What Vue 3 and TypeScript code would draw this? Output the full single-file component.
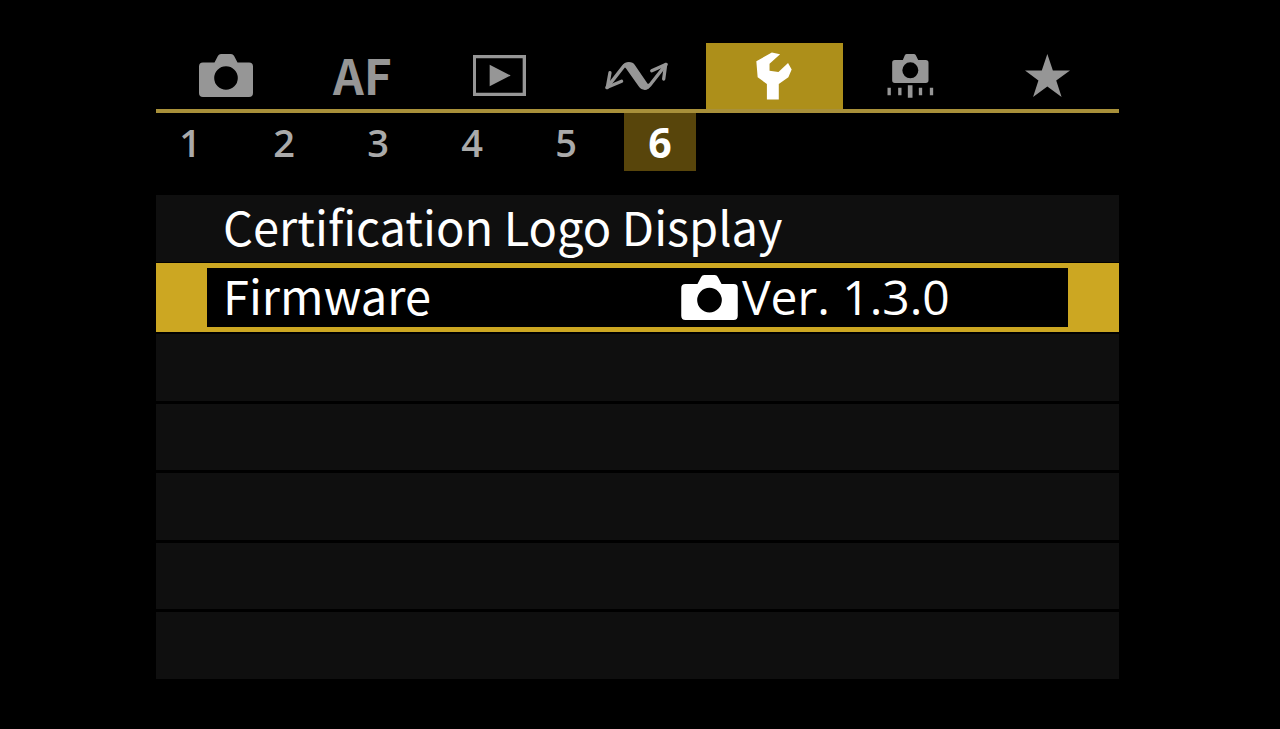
<script setup lang="ts">
import { ref } from 'vue'

interface Tab {
  id: string
  label: string
}

const tabs: Tab[] = [
  { id: 'shooting', label: 'Shooting' },
  { id: 'af', label: 'Autofocus' },
  { id: 'playback', label: 'Playback' },
  { id: 'network', label: 'Network' },
  { id: 'setup', label: 'Set-up' },
  { id: 'custom', label: 'Custom functions' },
  { id: 'mymenu', label: 'My menu' },
]
const pages: number[] = [1, 2, 3, 4, 5, 6]

const activeTab = ref('setup')
const activePage = ref(6)
</script>

<template>
  <main class="screen">
    <nav class="tabs" aria-label="Menus">
      <button
        v-for="tab in tabs"
        :key="tab.id"
        type="button"
        class="tab"
        :class="{ active: tab.id === activeTab }"
        :aria-label="tab.label"
        @click="activeTab = tab.id"
      >
        <svg v-if="tab.id === 'shooting'" class="icon-camera" viewBox="0 0 54 43">
          <path fill-rule="evenodd" d="M4 8.500H15.500L19 1.800Q20 0 22 0H32Q34 0 35 1.800L38.500 8.500H50Q54 8.500 54 12.500V39Q54 43 50 43H4Q0 43 0 39V12.500Q0 8.500 4 8.500ZM27 12.200A11.800 11.800 0 1 0 27 35.800A11.800 11.800 0 1 0 27 12.200Z" />
        </svg>
        <span v-else-if="tab.id === 'af'" class="af">AF</span>
        <svg v-else-if="tab.id === 'playback'" class="icon-play" viewBox="132 57 159 123">
          <path fill-rule="evenodd" d="M132 57H291V180H132ZM141 67V170H281V67ZM182 86L245 118.500L182 151Z" />
        </svg>
        <svg v-else-if="tab.id === 'network'" class="icon-network" viewBox="47 44 190 90">
          <g fill="none" stroke="currentColor" stroke-width="10" stroke-linecap="round" stroke-linejoin="round">
            <path d="M53 124L103 60Q109 53 118 54" />
            <path d="M62 79L54 123L97 105" />
            <path d="M168 124Q176 125 182 117L231 54" />
            <path d="M188 73L230 54L224 98" />
          </g>
          <path d="M100 56Q107 47 119 47Q131 47 138 57L174 110Q176 114 181 112L184 119Q177 131 167 131Q156 131 149 121L110 66Q107 62 102 62Z" />
        </svg>
        <svg v-else-if="tab.id === 'setup'" class="icon-wrench" viewBox="167 48 109 144">
          <path d="M215 49L240 54L208 83V104L235 108L264 81L275 100L265 124L236 144V191H200V144L172 124L168 75Z" />
        </svg>
        <svg v-else-if="tab.id === 'custom'" class="icon-custom" viewBox="560 53 140 132">
          <path fill-rule="evenodd" d="M583 71H607L613 57Q615 53 619 53H640Q644 53 646 57L653 71H676Q684 71 684 79V132Q684 140 676 140H583Q575 140 575 132V79Q575 71 583 71ZM629.500 78A24 24 0 1 0 629.500 126A24 24 0 1 0 629.500 78Z" />
          <path d="M561 154H571V177H561ZM593 154H603V177H593ZM622 147H636V184H622ZM655 154H665V177H655ZM688 154H698V177H688Z" />
        </svg>
        <svg v-else class="icon-star" viewBox="260 55 134 128">
          <path d="M326.500 55L343 104H394L353 134L369 183L326.500 152L284 183L300 134L260 104H310Z" />
        </svg>
      </button>
    </nav>

    <nav class="pages" aria-label="Pages">
      <button
        v-for="page in pages"
        :key="page"
        type="button"
        class="page"
        :class="{ active: page === activePage }"
        @click="activePage = page"
      >{{ page }}</button>
    </nav>

    <ul class="menu">
      <li><button type="button" class="row"><span class="name">Certification Logo Display</span></button></li>
      <li>
        <button type="button" class="row selected">
          <span class="name">Firmware</span>
          <span class="value">
            <svg class="icon-body" viewBox="0 0 54 43">
              <path fill-rule="evenodd" d="M4 8.500H15.500L19 1.800Q20 0 22 0H32Q34 0 35 1.800L38.500 8.500H50Q54 8.500 54 12.500V39Q54 43 50 43H4Q0 43 0 39V12.500Q0 8.500 4 8.500ZM27 12.200A11.800 11.800 0 1 0 27 35.800A11.800 11.800 0 1 0 27 12.200Z" />
            </svg>
            <span class="version">Ver. 1.3.0</span>
          </span>
        </button>
      </li>
      <li v-for="n in 5" :key="n"></li>
    </ul>
  </main>
</template>

<style>
body {
  margin: 0;
  background: #000;
}
</style>

<style scoped>
.screen {
  box-sizing: border-box;
  min-height: 100vh;
  padding: 43px 161px 50px 156px;
  background: #000;
  color: #fff;
  font-family: "Noto Sans CJK JP", "Noto Sans", sans-serif;
}
button {
  margin: 0;
  padding: 0;
  border: 0;
  background: none;
  color: inherit;
  font: inherit;
  cursor: pointer;
}
svg {
  display: block;
  fill: currentColor;
}
.tabs {
  display: grid;
  grid-template-columns: repeat(7, 1fr);
  height: 66px;
  padding: 0 2px;
  border-bottom: 4px solid #a8903a;
}
.tab {
  display: flex;
  align-items: center;
  justify-content: center;
  padding: 0 2px 1px 0;
  color: #969696;
}
.tab.active {
  background: #ad8f1a;
  color: #fff;
}
.af {
  padding-bottom: 4px;
  font-size: 48px;
  line-height: 60px;
  font-weight: 700;
}
.icon-camera { width: 54px; height: 43px; }
.icon-play { width: 53px; height: 41px; }
.icon-network { width: 63px; height: 30px; }
.icon-wrench { width: 36px; height: 48px; }
.icon-custom { width: 47px; height: 44px; }
.icon-star { width: 45px; height: 43px; }
.pages {
  display: flex;
  gap: 22px;
  height: 58px;
  margin: 0 -2px;
}
.page {
  width: 72px;
  color: #aaa;
  font-family: "Open Sans", "Noto Sans", sans-serif;
  font-size: 38px;
  line-height: 58px;
  font-weight: 600;
}
.page.active {
  background: #58450b;
  color: #fff;
  font-size: 41px;
  font-weight: 700;
}
.menu {
  display: grid;
  grid-template-rows: repeat(7, 1fr);
  gap: 3px;
  height: 484px;
  margin: 24px 0 0;
  padding: 0;
  list-style: none;
  font-size: 47px;
  line-height: 52px;
}
.menu li {
  display: flex;
  background: #0f0f0f;
}
.row {
  box-sizing: border-box;
  display: flex;
  align-items: center;
  width: 100%;
  padding: 0 67px;
  text-align: left;
  white-space: nowrap;
}
.row.selected {
  margin: -2px 0 -1px;
  padding: 0 16px;
  border: solid #cca722;
  border-width: 5px 51px;
  background: #000;
}
.name {
  flex: 0 0 55%;
  padding-bottom: 5px;
}
.value {
  display: flex;
  align-items: center;
  gap: 4px;
  margin-left: 2px;
}
.icon-body { width: 57px; height: 45px; }
.version {
  font-family: "Open Sans", "Noto Sans", sans-serif;
  font-size: 48px;
}
</style>
